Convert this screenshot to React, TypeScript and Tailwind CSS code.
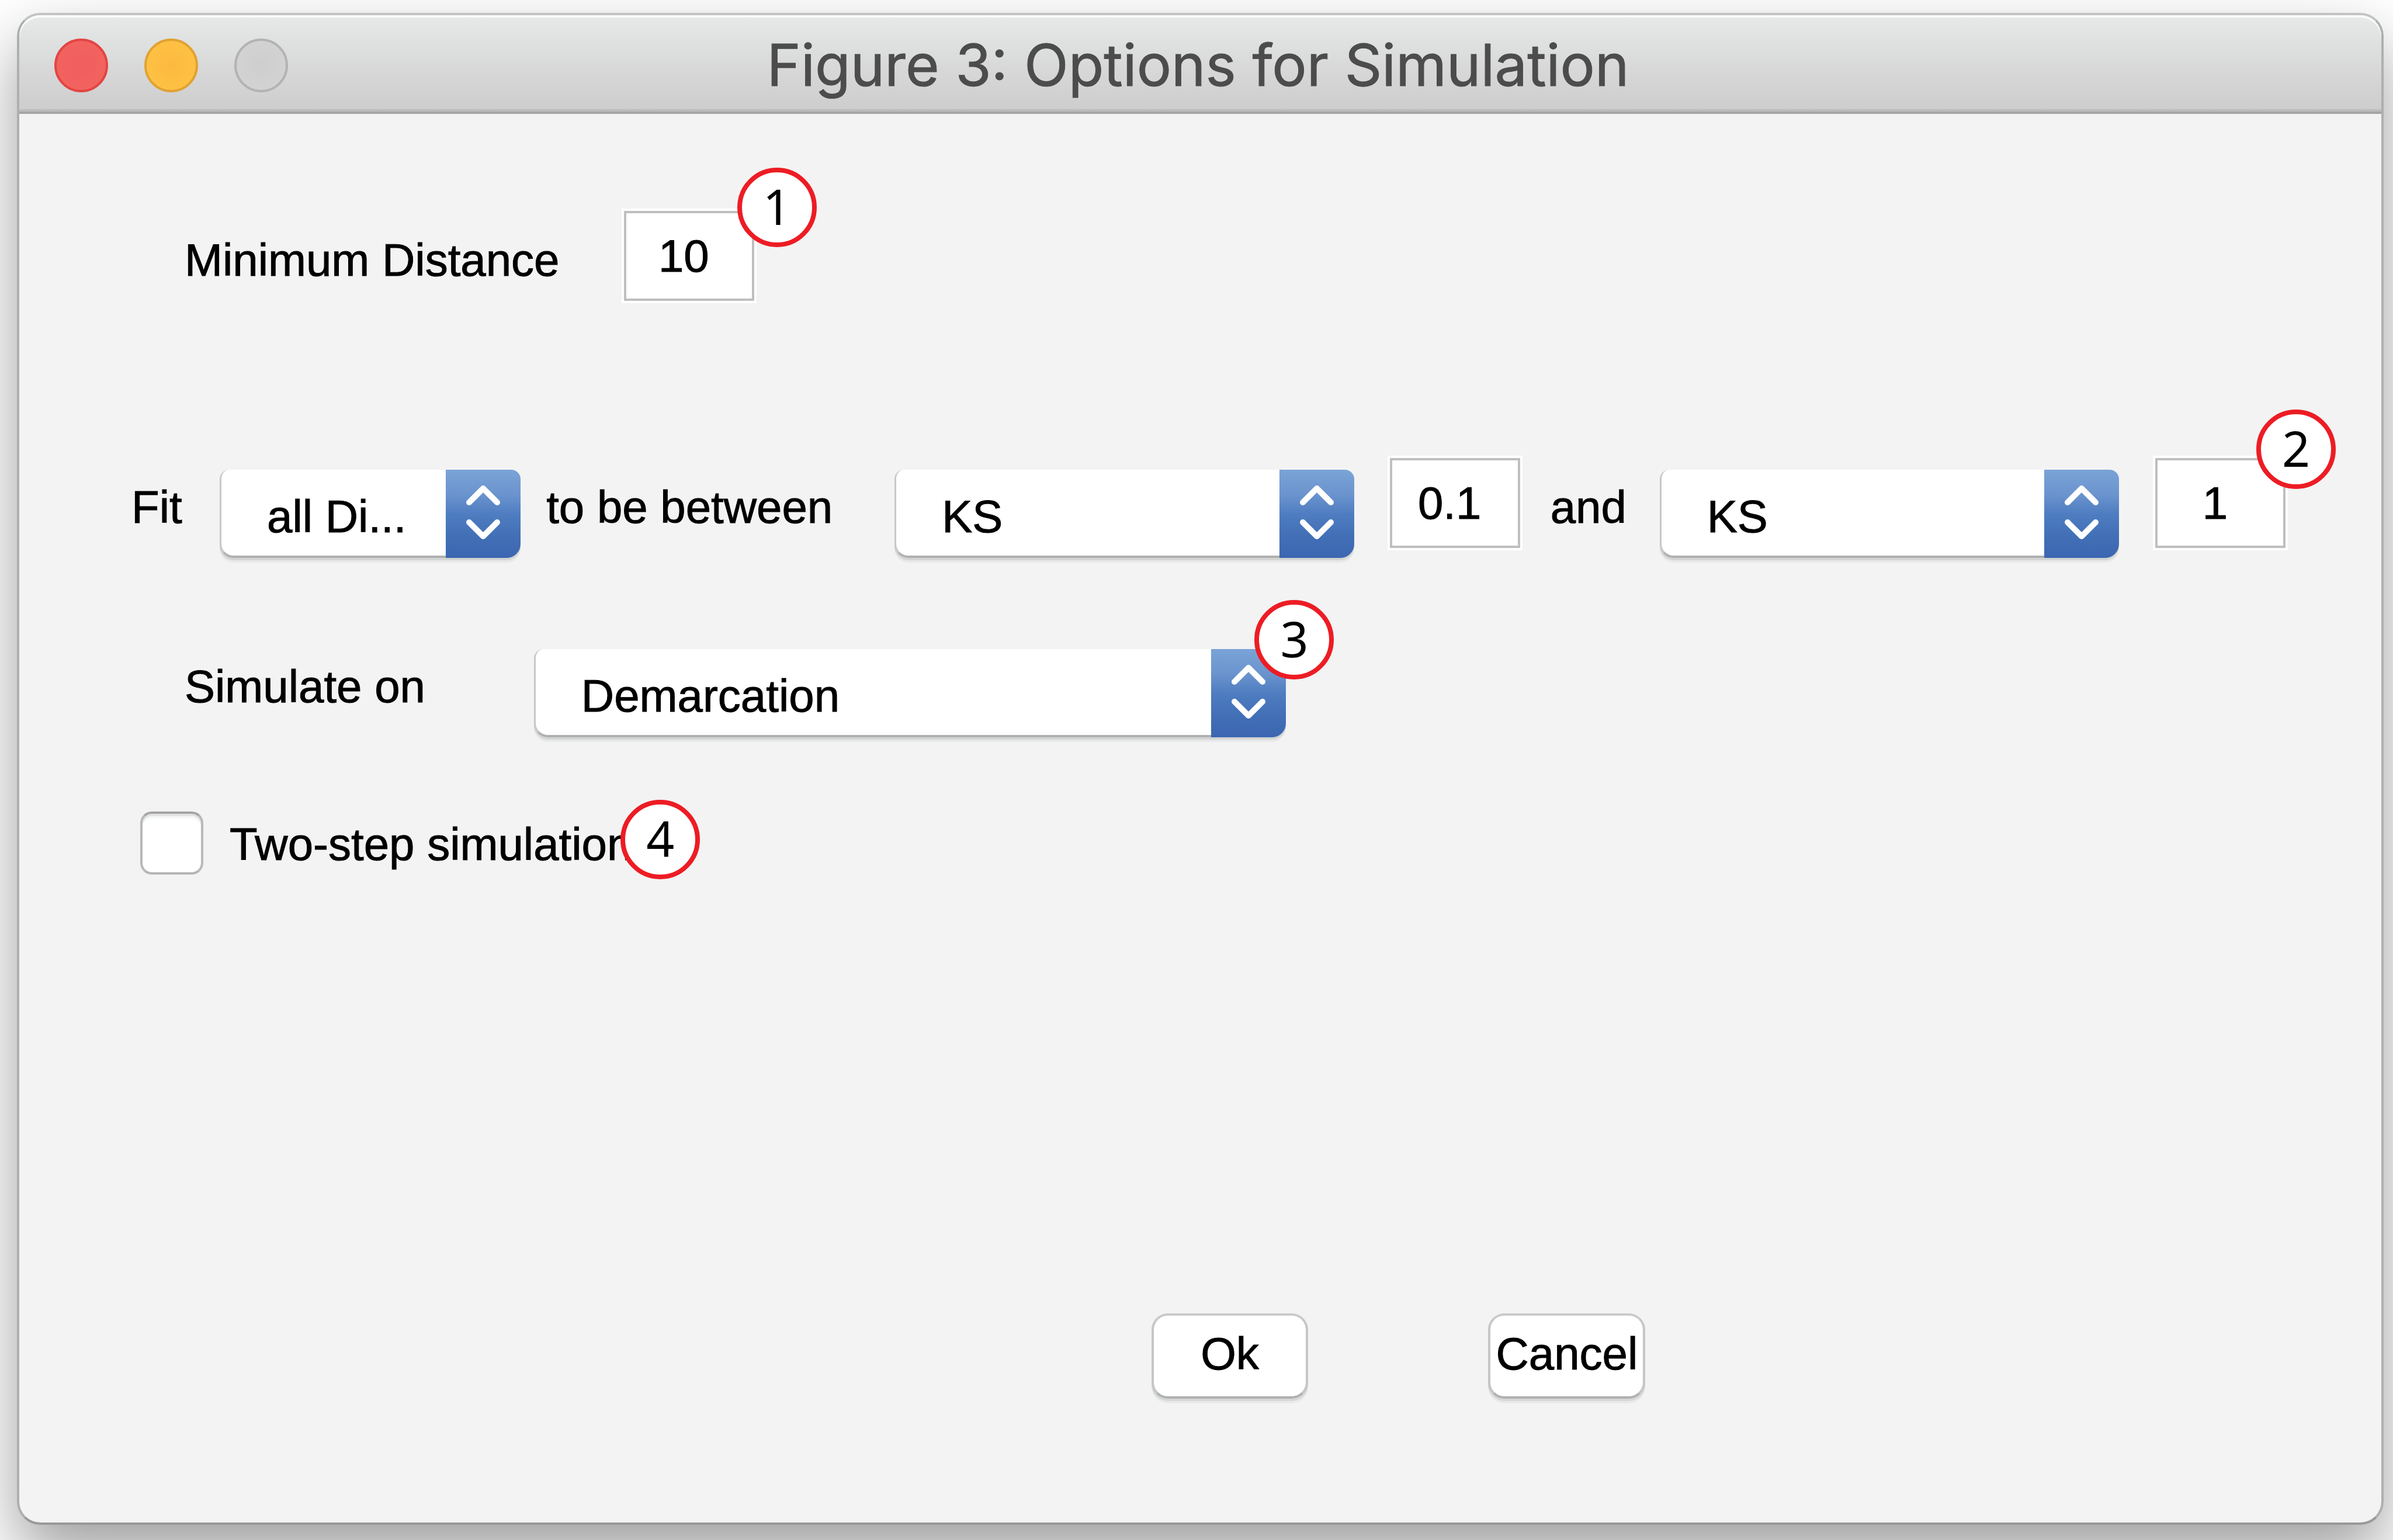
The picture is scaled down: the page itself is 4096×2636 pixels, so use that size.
import React from "react";

function Badge({ n, className }: { n: number; className: string }) {
  return (
    <span
      className={`absolute z-10 flex h-[136px] w-[136px] items-center justify-center rounded-full border-8 border-[#ed1c24] bg-white pb-[4px] font-['Noto_Sans',sans-serif] text-[84px] leading-none text-black [-webkit-text-stroke:0] ${className}`}
    >
      {n}
    </span>
  );
}

function Field({ id, label, value, children }: { id: string; label?: string; value: string; children?: React.ReactNode }) {
  return (
    <div className="relative min-w-0">
      <input
        id={id}
        aria-label={label}
        type="text"
        defaultValue={value}
        className="h-[162px] w-full border-4 border-white bg-white pr-[18px] text-center shadow-[inset_0_0_0_4px_#bfbfbf] outline-none"
      />
      {children}
    </div>
  );
}

function Select({ id, label, options, children }: { id: string; label?: string; options: string[]; children?: React.ReactNode }) {
  return (
    <div className="relative mt-6 h-[151px] min-w-0">
      <select
        id={id}
        aria-label={label}
        className="h-full w-full appearance-none rounded-t-[16px] rounded-b-[24px] border-b-4 border-l-[3px] border-b-[#b0b0b0] border-l-[#c8c8c8] bg-white pt-[12px] pl-[78px] text-black shadow-[0_4px_0_#d3d5d4,0_8px_0_#e7e9e9] outline-none"
      >
        {options.map((o) => (
          <option key={o}>{o}</option>
        ))}
      </select>
      <svg
        viewBox="0 0 128 151"
        fill="none"
        stroke="white"
        strokeWidth="10"
        strokeLinecap="round"
        strokeLinejoin="round"
        className="pointer-events-none absolute top-0 right-0 h-full w-[128px] rounded-tr-[16px] rounded-br-[24px] bg-[linear-gradient(180deg,#7aa3d7_0%,#6b94ce_28%,#4f7dc1_50%,#426fb6_75%,#3c66b1_100%)]"
      >
        <path d="M40 56 L64 32 L88 56" />
        <path d="M40 90 L64 114 L88 90" />
      </svg>
      {children}
    </div>
  );
}

function Label({ htmlFor, className = "", children }: { htmlFor: string; className?: string; children: React.ReactNode }) {
  return (
    <label htmlFor={htmlFor} className={`flex h-[176px] min-w-0 items-center whitespace-nowrap ${className}`}>
      {children}
    </label>
  );
}

function PushButton({ className, children }: { className: string; children: React.ReactNode }) {
  return (
    <button
      type="button"
      className={`h-[146px] min-w-0 rounded-[28px] border-4 border-x-[#c6c6c6] border-t-[#cacaca] border-b-[#b0b0b0] bg-white pb-[8px] text-center shadow-[0_4px_0_#d5d6d6,0_8px_0_#e7e9e9] ${className}`}
    >
      {children}
    </button>
  );
}

export default function App() {
  return (
    <div className="flex min-h-screen bg-white pt-[22px] pr-[16px] pb-[26px] pl-[29px] font-['Liberation_Sans',Arial,sans-serif] text-[78px] leading-none text-black [-webkit-text-stroke:1px]">
      <div className="flex flex-1 flex-col rounded-[40px] border-4 border-x-[#adb0ae] border-t-[#c1c4c2] border-b-[#989a99] bg-[#f3f3f3] shadow-[0_50px_110px_rgba(0,0,0,0.38)]">
        <header className="grid h-[169px] grid-cols-[1fr_auto_1fr] items-center rounded-t-[36px] border-b-4 border-[#a5a5a5] bg-[linear-gradient(180deg,#e8eaea_0%,#e0e2e2_25%,#d8d8d8_55%,#cdcdcd_100%)] pt-[6px] pr-[68px] pl-[60px] shadow-[inset_0_4px_0_#f9fbfb,inset_0_-4px_0_#bcbcbc]">
          <div className="flex gap-[62px]">
            <button type="button" aria-label="Close" className="h-[92px] w-[92px] rounded-full border-4 border-[#e24543] bg-[radial-gradient(circle,#f05f5e_0%,#f3645f_100%)]" />
            <button type="button" aria-label="Minimize" className="h-[92px] w-[92px] rounded-full border-4 border-[#e0a233] bg-[radial-gradient(circle,#fcb940_0%,#ffc444_100%)]" />
            <button type="button" aria-label="Zoom" className="h-[92px] w-[92px] rounded-full border-4 border-[#b3b3b3] bg-[radial-gradient(circle,#cecece_0%,#d4d4d4_100%)]" />
          </div>
          <h1 className="font-['Inter',sans-serif] text-[99px] leading-none whitespace-nowrap text-[#4b4c4b]">
            Figure 3: Options for Simulation
          </h1>
        </header>

        <main className="flex flex-1 flex-col pt-[162px] pb-[212px]">
          <div className="grid grid-cols-[748fr_231fr_2782fr] items-start pl-[283px]">
            <Label htmlFor="min-distance">Minimum Distance</Label>
            <Field id="min-distance" value="10">
              <Badge n={1} className="-top-[70px] -right-[103px]" />
            </Field>
          </div>

          <div className="mt-[247px] grid grid-cols-[151fr_515fr_640fr_786fr_57fr_231fr_235fr_786fr_58fr_231fr] items-start pr-[160px] pl-[192px]">
            <Label htmlFor="fit">Fit</Label>
            <Select id="fit" options={["all Di..."]} />
            <Label htmlFor="lower-metric" className="pl-[44px]">to be between</Label>
            <Select id="lower-metric" options={["KS"]} />
            <span />
            <Field id="lower" label="Lower bound" value="0.1" />
            <Label htmlFor="upper-metric" className="pl-[48px]">and</Label>
            <Select id="upper-metric" options={["KS"]} />
            <span />
            <Field id="upper" label="Upper bound" value="1">
              <Badge n={2} className="-top-[79px] -right-[82px]" />
            </Field>
          </div>

          <div className="mt-[131px] grid grid-cols-[598fr_1288fr_1875fr] items-start pl-[283px]">
            <Label htmlFor="simulate-on">Simulate on</Label>
            <Select id="simulate-on" options={["Demarcation"]}>
              <Badge n={3} className="-top-[84px] -right-[82px]" />
            </Select>
          </div>

          <div className="mt-[126px] flex items-center gap-[45px] pl-[207px]">
            <input
              id="two-step"
              type="checkbox"
              className="h-[108px] w-[108px] appearance-none rounded-[20px] border-4 border-x-[#b8b8b8] border-t-[#a5a5a5] border-b-[#b5b5b5] bg-white shadow-[inset_0_4px_0_#e2e4e4,inset_0_8px_0_#f6f8f8]"
            />
            <label htmlFor="two-step" className="relative pt-[4px] whitespace-nowrap">
              Two-step simulation
              <Badge n={4} className="-top-[33px] -right-[116px]" />
            </label>
          </div>

          <div className="mt-auto grid grid-cols-[1938fr_269fr_308fr_269fr_1260fr]">
            <PushButton className="col-start-2">Ok</PushButton>
            <PushButton className="col-start-4">Cancel</PushButton>
          </div>
        </main>
      </div>
    </div>
  );
}
